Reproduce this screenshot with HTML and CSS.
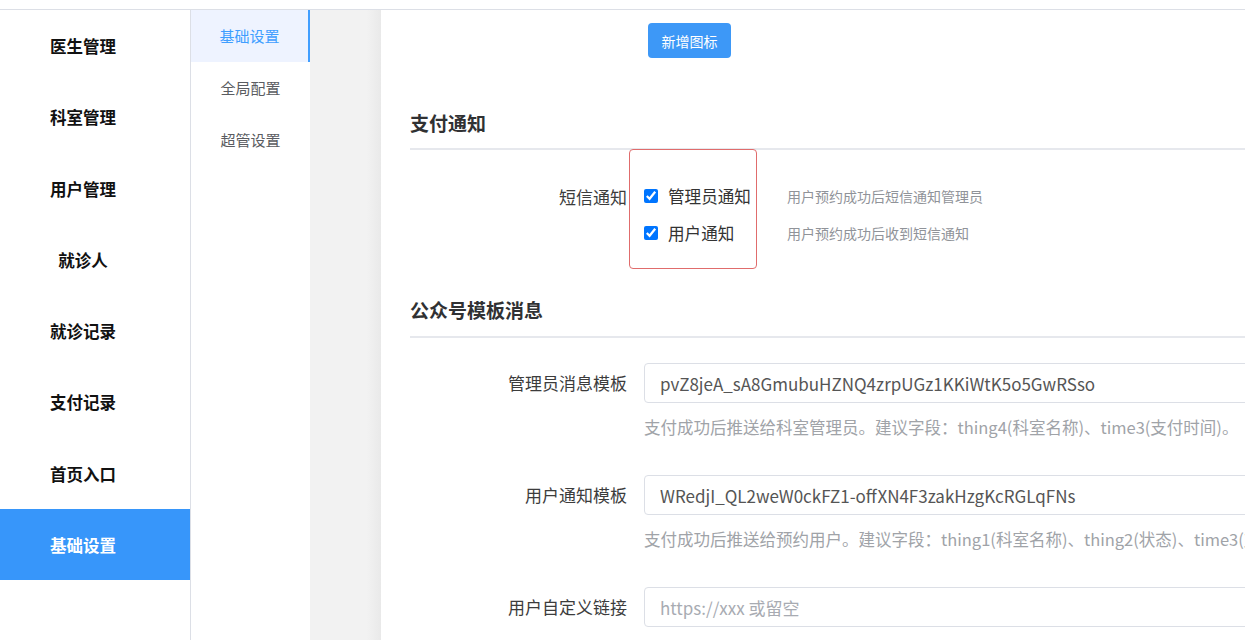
FILE: index.html
```html
<!DOCTYPE html>
<html lang="zh-CN">
<head>
  <meta charset="UTF-8">
  <title>基础设置</title>
  <link rel="stylesheet" href="styles.css">
</head>
<body>

  <div class="topbar"></div>

  <div class="layout">
    <div class="side">
      <div class="side-item">医生管理</div>
      <div class="side-item">科室管理</div>
      <div class="side-item">用户管理</div>
      <div class="side-item">就诊人</div>
      <div class="side-item">就诊记录</div>
      <div class="side-item">支付记录</div>
      <div class="side-item">首页入口</div>
      <div class="side-item active">基础设置</div>
    </div>

    <div class="sub">
      <div class="sub-item active">基础设置</div>
      <div class="sub-item">全局配置</div>
      <div class="sub-item">超管设置</div>
    </div>

    <div class="gap"></div>

    <div class="main">
      <button class="btn" type="button">新增图标</button>

      <h3 class="section-title">支付通知</h3>

      <div class="sms-row">
        <div class="sms-label">短信通知</div>
        <div class="sms-box">
          <label class="check"><input type="checkbox" checked> 管理员通知</label>
          <label class="check"><input type="checkbox" checked> 用户通知</label>
        </div>
        <div class="sms-hints">
          <div>用户预约成功后短信通知管理员</div>
          <div>用户预约成功后收到短信通知</div>
        </div>
      </div>

      <h3 class="section-title second">公众号模板消息</h3>

      <div class="field">
        <label class="field-label" for="adminTpl">管理员消息模板</label>
        <div class="field-body">
          <input type="text" id="adminTpl" value="pvZ8jeA_sA8GmubuHZNQ4zrpUGz1KKiWtK5o5GwRSso">
          <div class="field-hint">支付成功后推送给科室管理员。建议字段：thing4(科室名称)、time3(支付时间)。</div>
        </div>
      </div>

      <div class="field">
        <label class="field-label" for="userTpl">用户通知模板</label>
        <div class="field-body">
          <input type="text" id="userTpl" value="WRedjI_QL2weW0ckFZ1-offXN4F3zakHzgKcRGLqFNs">
          <div class="field-hint">支付成功后推送给预约用户。建议字段：thing1(科室名称)、thing2(状态)、time3(支付时间)。</div>
        </div>
      </div>

      <div class="field">
        <label class="field-label" for="userLink">用户自定义链接</label>
        <div class="field-body">
          <input type="text" id="userLink" placeholder="https://xxx 或留空">
        </div>
      </div>
    </div>
  </div>

</body>
</html>
```

FILE: styles.css
```css
body {
  font-family: "Noto Sans CJK SC", "Noto Sans", sans-serif;
  background: white;
  margin: 0;
  padding: 0;
  overflow: hidden;
  height: 640px;
}

.topbar {
  height: 9px;
  border-bottom: 1px solid #dcdfe6;
}

.layout {
  display: flex;
  height: 630px;
}

/* left menu */
.side {
  width: 190px;
  flex-shrink: 0;
  border-right: 1px solid #dcdfe6;
}

.side-item {
  height: 71.3px;
  line-height: 72px;
  padding-right: 24px;
  text-align: center;
  font-size: 16.5px;
  font-weight: bold;
  color: #111;
}

.side-item.active {
  background: #3796fa;
  color: white;
}

/* sub menu */
.sub {
  width: 119px;
  flex-shrink: 0;
}

.sub-item {
  height: 52px;
  line-height: 52px;
  text-align: center;
  font-size: 15px;
  color: #5a5c61;
}

.sub-item.active {
  background: #eef3ff;
  color: #409eff;
  border-right: 2px solid #409eff;
}

.gap {
  width: 71px;
  flex-shrink: 0;
  background: linear-gradient(to right, #f2f2f2 80%, #e9e9e9 100%);
}

/* content */
.main {
  flex: 1;
  min-width: 0;
  overflow: hidden;
  padding-left: 29px;
}

.btn {
  display: block;
  margin: 13px 0 0 238px;
  width: 83px;
  height: 35px;
  background-color: #3d98f7;
  color: white;
  font-family: inherit;
  font-size: 14px;
  border: none;
  border-radius: 4px;
  cursor: pointer;
}

.section-title {
  margin: 52px 0 0;
  font-size: 19px;
  line-height: 26px;
  color: #303133;
  padding-bottom: 12px;
  border-bottom: 2px solid #e6e8ed;
}

.section-title.second {
  margin-top: 28px;
  padding-bottom: 13px;
}

.sms-row {
  display: flex;
  align-items: flex-start;
}

.sms-label {
  width: 217px;
  text-align: right;
  padding-top: 28px;
  line-height: 37px;
  font-size: 17px;
  color: #3c3c3c;
}

.sms-box {
  margin-left: 2px;
  padding: 27px 5px 17px 14px;
  border: 1px solid #e06c6c;
  border-radius: 4px;
  margin-top: -1px;
}

.check {
  display: flex;
  align-items: center;
  height: 37px;
  font-size: 16.6px;
  color: #333;
  white-space: nowrap;
}

.check input {
  width: 14px;
  height: 14px;
  margin: 0 10px 0 0;
}

.sms-hints {
  margin-left: 30px;
  padding-top: 28px;
  line-height: 37px;
  font-size: 14px;
  color: #909399;
  white-space: nowrap;
}

.field {
  display: flex;
  margin-top: 25px;
}

.field + .field {
  margin-top: 36px;
}

.field-label {
  width: 217px;
  flex-shrink: 0;
  text-align: right;
  line-height: 40px;
  font-size: 17px;
  color: #3c3c3c;
}

.field-body {
  margin-left: 17px;
}

.field input {
  display: block;
  box-sizing: border-box;
  width: 680px;
  height: 40px;
  padding: 0 15px;
  font-family: inherit;
  font-size: 17px;
  color: #555;
  border: 1px solid #dcdfe6;
  border-radius: 4px;
  outline: none;
}

.field input::placeholder {
  color: #a8abb2;
}

.field-hint {
  margin-top: 12px;
  line-height: 24px;
  font-size: 16.5px;
  color: #a0a3a8;
  white-space: nowrap;
}
```
